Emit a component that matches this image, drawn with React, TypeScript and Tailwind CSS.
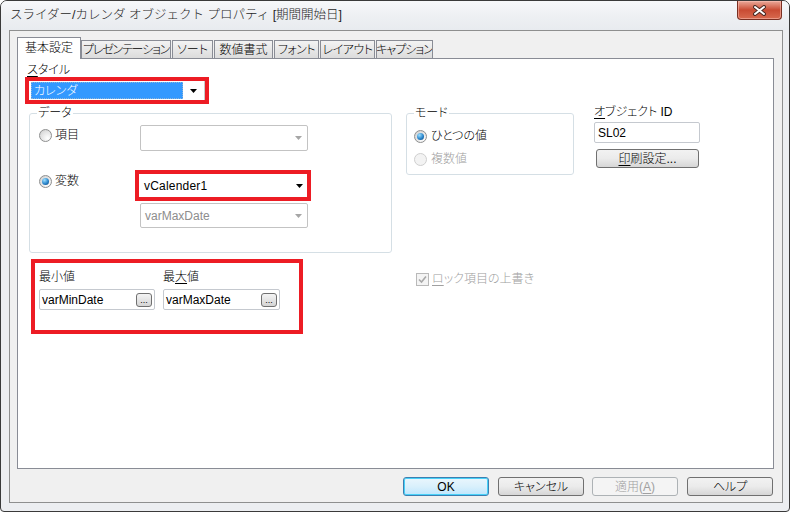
import React from "react";

const palt = "[font-feature-settings:'palt']";

function Radio({ checked, disabled }: { checked?: boolean; disabled?: boolean }) {
  return (
    <span
      className={
        disabled
          ? "w-[13px] h-[13px] shrink-0 rounded-full border border-[#cfcfcf] bg-[#f3f3f3] flex items-center justify-center"
          : "w-[13px] h-[13px] shrink-0 rounded-full border border-[#8e8f8f] bg-[radial-gradient(circle_at_70%_75%,#ffffff,#e4e4e4_55%,#c9c9c9)] flex items-center justify-center"
      }
    >
      {checked && (
        <span className="w-[7px] h-[7px] rounded-full bg-[radial-gradient(circle_at_35%_30%,#9fe0ff,#2a86cc_55%,#0b3f73)]" />
      )}
    </span>
  );
}

function Arrow({ color }: { color: string }) {
  return (
    <svg width="7" height="4" viewBox="0 0 7 4">
      <path d="M0 0H7L3.5 4Z" fill={color} />
    </svg>
  );
}

function Button({
  children,
  className,
  disabled,
  focused,
}: {
  children: React.ReactNode;
  className: string;
  disabled?: boolean;
  focused?: boolean;
}) {
  const base =
    "h-[19px] w-[86px] flex items-center justify-center rounded-[3px] text-[12px] leading-none ";
  const style = disabled
    ? "border border-[#adb2b5] bg-[#f4f4f4] text-[#a0a0a0]"
    : focused
    ? "border border-[#3c7fb1] bg-gradient-to-b from-[#eaf6fd] via-[#d9f0fc] to-[#bee6fd] shadow-[inset_0_0_0_1px_#48d1f8]"
    : "border border-[#707070] bg-gradient-to-b from-[#f2f2f2] via-[#ebebeb] to-[#d6d6d6]";
  return <div className={base + style + " " + className}>{children}</div>;
}

function DotsButton() {
  return (
    <div className="w-[16px] h-[14px] rounded-[3px] border border-[#707070] bg-gradient-to-b from-[#f4f4f4] to-[#d5d5d5] flex items-end justify-center pb-[1px] text-[9px] leading-[9px]">
      ...
    </div>
  );
}

const tab =
  "h-[18px] bg-gradient-to-b from-[#f3f3f3] to-[#dcdcdc] border border-b-0 border-[#898c95] flex items-center justify-center whitespace-nowrap overflow-hidden";

export default function App() {
  return (
    <div className="w-[790px] h-[512px] bg-white">
      <div className="w-[790px] h-[512px] flex flex-col border border-[#3a3a3a] rounded-t-[7px] rounded-b-[4px] bg-[#eceef1] overflow-hidden text-black font-light font-['Liberation_Sans','Noto_Sans_CJK_JP',sans-serif]">
        {/* title bar */}
        <div className="h-[29px] shrink-0 flex items-start bg-gradient-to-b from-[#f7f8fa] via-[#eef0f3] to-[#e8ebef]">
          <div className="pl-[9px] pt-[6px] text-[12.5px] leading-[16px] text-[#1e1e1e]">
            スライダー/カレンダ オブジェクト プロパティ [期間開始日]
          </div>
          <div className="ml-auto mr-[7px] w-[45px] h-[19px] rounded-b-[4px] border border-t-0 border-[#7a2f22] bg-gradient-to-b from-[#e9a99a] via-[#c94b33] to-[#d86a4f] flex items-center justify-center shadow-[inset_0_0_0_1px_rgba(255,200,190,0.5)]">
            <svg width="15" height="11" viewBox="0 0 15 11">
              <path d="M3 2L12 9M12 2L3 9" stroke="#4a2a24" strokeWidth="4" strokeLinecap="round" />
              <path d="M3 2L12 9M12 2L3 9" stroke="#ffffff" strokeWidth="2" strokeLinecap="round" />
            </svg>
          </div>
        </div>

        {/* body */}
        <div className="ml-[8px] mr-[6px] mb-[8px] flex-1 border border-[#8e8f8f] bg-[#f0f0f0] flex flex-col">
          {/* tabs */}
          <div className={"h-[27px] shrink-0 flex items-end pl-[7px] relative z-10 text-[12px] " + palt}>
            <div className="w-[64px] h-[22px] -mb-px bg-white border border-b-0 border-[#898c95] flex items-center justify-center pb-[2px] whitespace-nowrap">
              基本設定
            </div>
            <div className={tab + " w-[90px] tracking-[-1.2px]"}>プレゼンテーション</div>
            <div className={tab + " ml-[1px] w-[41px]"}>ソート</div>
            <div className={tab + " ml-[1px] w-[59px]"}>数値書式</div>
            <div className={tab + " ml-[1px] w-[45px] tracking-[-0.5px]"}>フォント</div>
            <div className={tab + " ml-[1px] w-[55px] tracking-[-0.5px]"}>レイアウト</div>
            <div className={tab + " ml-[1px] w-[57px] tracking-[-1px]"}>キャプション</div>
          </div>

          {/* panel */}
          <div className={"ml-[7px] mr-[8px] h-[411px] shrink-0 border border-[#898c95] bg-white flex text-[12px] " + palt}>
            {/* left column */}
            <div className="w-[388px] shrink-0 flex flex-col items-start">
              <div className="ml-[9px] mt-[4px] leading-[14px]">
                <span className="underline underline-offset-2">ス</span>タイル
              </div>
              <div className="ml-[7px] w-[184px] h-[27px] border-[4px] border-[#ed1c24] bg-white flex">
                <div className="ml-[2px] my-[1px] w-[152px] bg-[#3399ff] text-white pl-[2px] flex items-center leading-none border border-dotted border-[#8fb4d8]">
                  カレンダ
                </div>
                <div className="flex-1 flex items-center justify-center border-r border-[#c9c9c9]">
                  <Arrow color="#000" />
                </div>
              </div>

              {/* データ group */}
              <fieldset className="ml-[11px] mt-[2px] w-[363px] h-[147px] border border-[#d5dfe5] rounded-[3px]">
                <legend className="ml-[7px] px-[1px] leading-[14px]">データ</legend>
                <div className="flex">
                  <div className="w-[105px] pl-[9px] flex flex-col">
                    <div className="mt-[8px] flex items-center gap-[3px] leading-[14px]">
                      <Radio />
                      <span>項目</span>
                    </div>
                    <div className="mt-[32px] flex items-center gap-[3px] leading-[14px]">
                      <Radio checked />
                      <span>変数</span>
                    </div>
                  </div>
                  <div className="flex flex-col">
                    <div className="ml-[5px] mt-[5px] w-[168px] h-[26px] border border-[#c3c3c3] rounded-[2px] bg-white flex items-center justify-end pr-[5px]">
                      <Arrow color="#a6a6a6" />
                    </div>
                    <div className="mt-[19px] w-[176px] h-[31px] border-[4px] border-[#ed1c24] bg-white flex items-center justify-between pl-[5px] pr-[4px]">
                      <span className="text-[12px] tracking-[0.2px]">vCalender1</span>
                      <Arrow color="#000" />
                    </div>
                    <div className="ml-[5px] mt-[2px] w-[168px] h-[25px] border border-[#c3c3c3] rounded-[2px] bg-white flex items-center justify-between pl-[4px] pr-[5px] text-[#8d8d8d]">
                      <span>varMaxDate</span>
                      <Arrow color="#a6a6a6" />
                    </div>
                  </div>
                </div>
              </fieldset>

              {/* min / max */}
              <div className="ml-[13px] mt-[6px] w-[272px] h-[75px] border-[4px] border-[#ed1c24] bg-white flex pl-[4px] gap-[8px]">
                <div className="flex flex-col">
                  <div className="mt-[7px] leading-[14px]">最小値</div>
                  <div className="mt-[5px] w-[116px] h-[21px] border border-[#c5c9cf] rounded-[2px] flex items-center justify-between pl-[2px] pr-[2px]">
                    <span>varMinDate</span>
                    <DotsButton />
                  </div>
                </div>
                <div className="flex flex-col">
                  <div className="mt-[7px] leading-[14px]">
                    最<span className="underline underline-offset-2">大</span>値
                  </div>
                  <div className="mt-[5px] w-[117px] h-[21px] border border-[#c5c9cf] rounded-[2px] flex items-center justify-between pl-[2px] pr-[2px]">
                    <span>varMaxDate</span>
                    <DotsButton />
                  </div>
                </div>
              </div>
            </div>

            {/* middle column */}
            <div className="w-[168px] shrink-0 mt-[47px] flex flex-col">
              <fieldset className="w-[168px] h-[69px] border border-[#d5dfe5] rounded-[3px]">
                <legend className="ml-[7px] px-[1px] leading-[14px]">モード</legend>
                <div className="mt-[9px] pl-[7px] flex items-center gap-[4px] leading-[14px]">
                  <Radio checked />
                  <span>ひとつの値</span>
                </div>
                <div className="mt-[9px] pl-[7px] flex items-center gap-[4px] leading-[14px] text-[#a0a0a0]">
                  <Radio disabled />
                  <span>複数値</span>
                </div>
              </fieldset>
              <div className="mt-[97px] ml-[10px] flex items-center gap-[3px] leading-[14px] text-[#a0a0a0]">
                <span className="w-[13px] h-[13px] border border-[#b9b9b9] bg-[#f4f4f4] flex items-center justify-center">
                  <svg width="9" height="9" viewBox="0 0 9 9">
                    <path d="M1 4.5L3.5 7L8 1.5" stroke="#a8a8a8" strokeWidth="1.6" fill="none" />
                  </svg>
                </span>
                <span>
                  <span className="underline underline-offset-2">ロ</span>ック項目の上書き
                </span>
              </div>
            </div>

            {/* right column */}
            <div className="ml-[20px] mt-[46px] flex flex-col items-start">
              <div className="leading-[14px]">
                <span className="underline underline-offset-2">オ</span>ブジェクト ID
              </div>
              <div className="mt-[3px] w-[106px] h-[21px] border border-[#c5c9cf] rounded-[2px] flex items-center pl-[3px]">
                SL02
              </div>
              <Button className="mt-[6px] ml-[2px] w-[103px]">
                <span>
                  <span className="underline underline-offset-2">印</span>刷設定...
                </span>
              </Button>
            </div>
          </div>

          {/* bottom buttons */}
          <div className={"mt-[8px] flex pl-[393px] " + palt}>
            <Button focused className="">OK</Button>
            <Button className="ml-[9px]">キャンセル</Button>
            <Button disabled className="ml-[8px]">
              <span>
                適用(<span className="underline underline-offset-2">A</span>)
              </span>
            </Button>
            <Button className="ml-[9px]">ヘルプ</Button>
          </div>
        </div>
      </div>
    </div>
  );
}
